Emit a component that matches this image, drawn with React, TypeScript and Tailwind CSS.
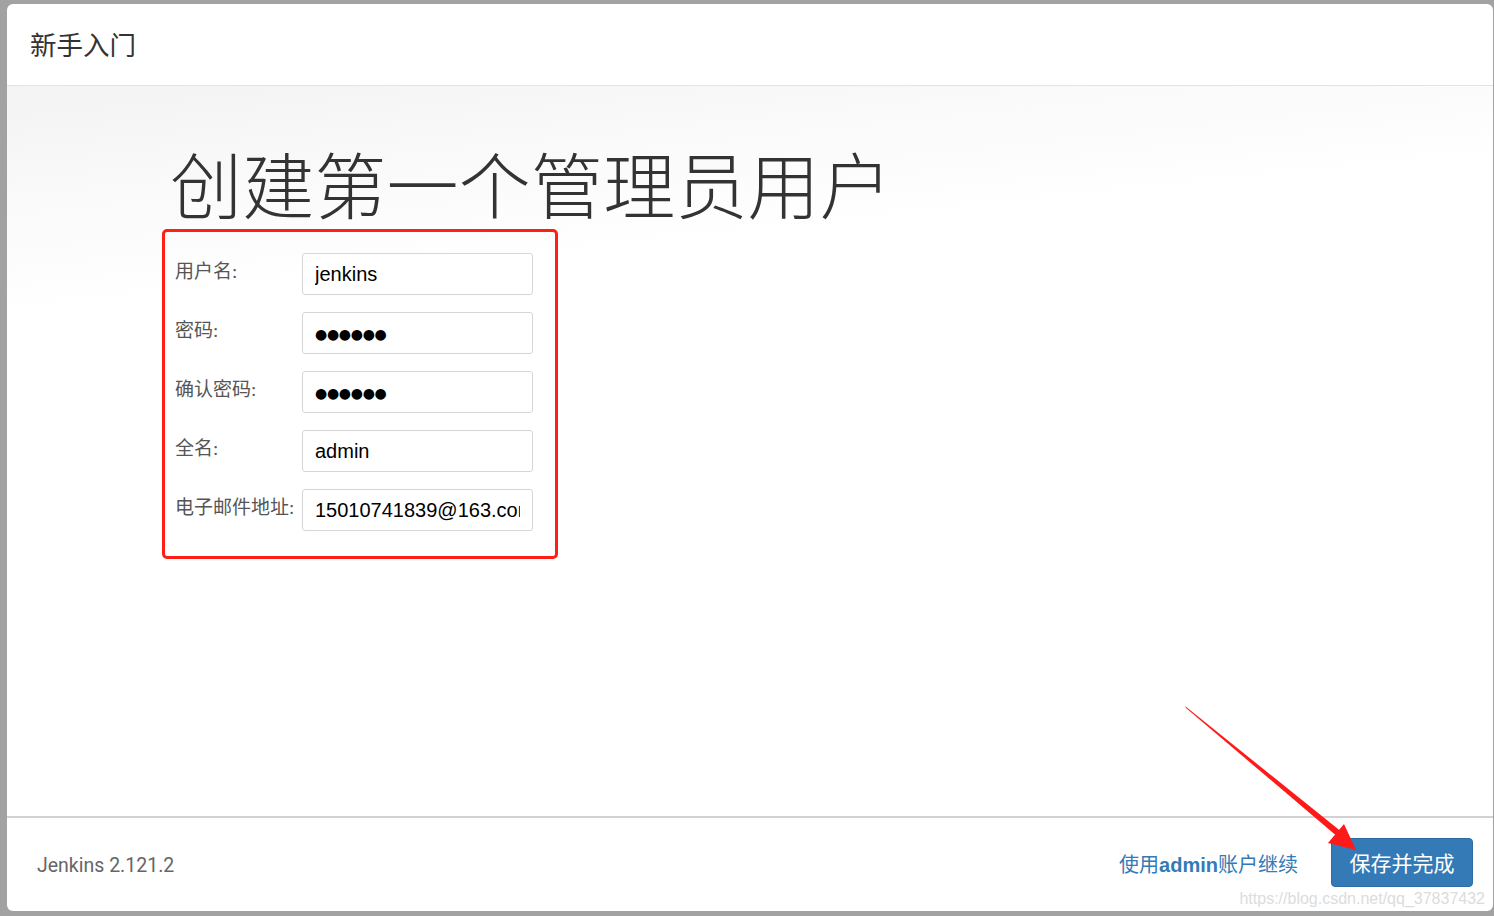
import React from "react";

const CJK = '"Noto Sans CJK SC", "Liberation Sans", sans-serif';

function Row({ label, value, dots }: { label: string; value: string; dots?: boolean }) {
  return (
    <div className="flex items-center h-[42px] mb-[17px]">
      <div
        className="w-[127px] shrink-0 text-[19px] leading-none text-[#555] -mt-[5px]"
        style={{ fontFamily: '"Liberation Serif", "Noto Sans CJK SC", serif' }}
      >
        {label}
      </div>
      <input
        readOnly
        type="text"
        value={value}
        className={
          "w-[231px] h-[42px] shrink-0 border border-[#d6d6d6] rounded-[3px] bg-white px-[12px] text-black outline-none " +
          (dots ? "text-[14px] tracking-[-0.3px] font-['DejaVu_Sans'] pt-[1px]" : "text-[20px] font-['Liberation_Sans']")
        }
      />
    </div>
  );
}

export default function App() {
  return (
    <div className="relative w-full h-[916px] bg-[#a2a2a2] pt-[4px] pl-[7px] pr-[1px] pb-[5px] overflow-hidden">
      <div className="flex flex-col h-full bg-white rounded-[6px] overflow-hidden">
        {/* header */}
        <div className="h-[82px] shrink-0 border-b border-[#e3e3e3] flex items-center pl-[23px]">
          <div className="text-[26.5px] text-[#333] leading-none -mt-[1px]" style={{ fontFamily: CJK }}>
            新手入门
          </div>
        </div>
        {/* body */}
        <div className="flex-1 bg-[linear-gradient(174deg,#f3f3f3_0%,#f9f9f9_12%,#ffffff_26%)] pl-[155px] pt-[60px]">
          <h1
            className="text-[72px] leading-none text-[#333] ml-[8px] font-light tracking-[0.2px]"
            style={{ fontFamily: CJK }}
          >
            创建第一个管理员用户
          </h1>
          <div className="mt-[11px] w-[396px] h-[330px] shrink-0 border-[3px] border-[#ff1f14] rounded-[5px] pl-[10px] pt-[21px]">
            <Row label="用户名:" value="jenkins" />
            <Row label="密码:" value="●●●●●●" dots />
            <Row label="确认密码:" value="●●●●●●" dots />
            <Row label="全名:" value="admin" />
            <Row label="电子邮件地址:" value="15010741839@163.com" />
          </div>
        </div>
        {/* footer */}
        <div className="relative h-[95px] shrink-0 border-t-[2px] border-[#d2d2d2] flex items-center pl-[30px] pr-[20px]">
          <div className="text-[19.5px] text-[#666] font-['Roboto'] mt-[2px]">Jenkins 2.121.2</div>
          <div className="flex-1" />
          <div className="text-[20px] text-[#337ab7] mr-[33px]" style={{ fontFamily: CJK }}>
            使用<span className="font-['Liberation_Sans'] font-bold">admin</span>账户继续
          </div>
          <button
            className="w-[142px] h-[49px] rounded-[4px] bg-[#337ab7] border border-[#2e6da4] text-white text-[21px] -mt-[4px]"
            style={{ fontFamily: CJK }}
          >
            保存并完成
          </button>
          <div className="absolute right-[8px] bottom-[1px] text-[16px] text-[#dcdcdc] font-['Liberation_Sans'] leading-none pb-[3px]">
            https://blog.csdn.net/qq_37837432
          </div>
        </div>
      </div>
      {/* annotation arrow */}
      <svg className="absolute left-0 top-0 pointer-events-none" width="1494" height="916" viewBox="0 0 1494 916">
        <polygon points="1185,706 1186,708 1339,838 1343,833" fill="#ff1a1a" />
        <polygon points="1356,850 1328,843 1344,824" fill="#ff1a1a" />
      </svg>
    </div>
  );
}
